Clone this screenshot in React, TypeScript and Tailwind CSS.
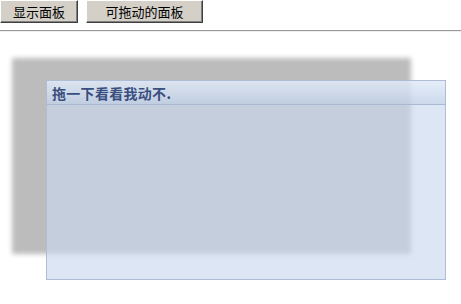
import React from "react";

const btn =
  "h-[23px] bg-[#d4d0c8] text-[13px] leading-none text-black border border-t-white border-l-white border-r-[#404040] border-b-[#404040] shadow-[inset_-1px_-1px_0_#808080] font-['Noto_Sans_CJK_SC',sans-serif]";

export default function App() {
  return (
    <div className="w-[461px] h-[304px] bg-white relative overflow-hidden font-['Noto_Sans_CJK_SC',sans-serif]">
      <div className="flex gap-2">
        <button className={btn + " w-[78px]"}>显示面板</button>
        <button className={btn + " w-[117px]"}>可拖动的面板</button>
      </div>
      <div className="mt-[7px] h-[2px] border-t border-t-[#9a9a9a] border-b border-b-[#eeeeee]" />
      <div className="absolute left-[12px] top-[58px] w-[399px] h-[196px] bg-[#bcbcbc] blur-[2.5px]" />
      <div className="absolute left-[46px] top-[80px] w-[400px] h-[200px] border border-[#aebdd6] bg-[rgba(200,216,238,0.64)] flex flex-col">
        <div className="h-[24px] border-b border-[#a9b9d3] bg-gradient-to-b from-[rgba(235,242,252,0.6)] to-[rgba(190,206,230,0.5)] flex items-center pl-[5px]">
          <span className="text-[14px] font-bold text-[#3a4f7f] tracking-[0.3px] leading-none">拖一下看看我动不.</span>
        </div>
      </div>
    </div>
  );
}
